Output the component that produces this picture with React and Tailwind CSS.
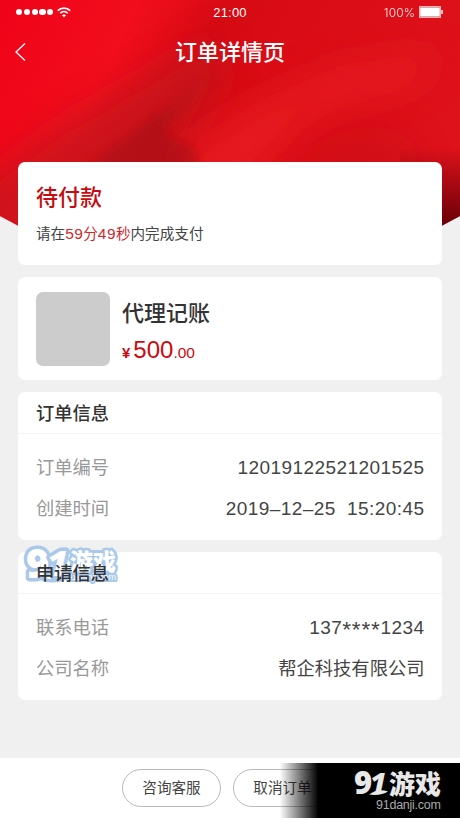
import React from 'react';

const FONT = "font-['Liberation_Sans','Noto_Sans_CJK_SC',sans-serif]";
const NUM = "font-['Inter','Noto_Sans_CJK_SC',sans-serif]";

const HeaderBackground = () => (
  <svg className="absolute left-0 top-0" width="460" height="260" viewBox="0 0 460 260" aria-hidden="true">
    <defs>
      <clipPath id="banner">
        <path d="M0 0H460V216L400 248H60L0 216Z" />
      </clipPath>
      <linearGradient id="base" x1="0" y1="0" x2="400" y2="200" gradientUnits="userSpaceOnUse">
        <stop offset="0" stopColor="#ef0218" />
        <stop offset="0.28" stopColor="#f20e1c" />
        <stop offset="0.46" stopColor="#d60b14" />
        <stop offset="0.6" stopColor="#da0c15" />
        <stop offset="1" stopColor="#de121b" />
      </linearGradient>
      <linearGradient id="edge" x1="0" y1="148" x2="0" y2="225" gradientUnits="userSpaceOnUse">
        <stop offset="0" stopColor="#6a0008" stopOpacity="0" />
        <stop offset="1" stopColor="#6a0008" />
      </linearGradient>
      <filter id="soft" filterUnits="userSpaceOnUse" x="-60" y="-60" width="580" height="380">
        <feGaussianBlur stdDeviation="17" />
      </filter>
      <filter id="fold" filterUnits="userSpaceOnUse" x="-60" y="-60" width="580" height="380">
        <feGaussianBlur stdDeviation="5" />
      </filter>
    </defs>
    <g clipPath="url(#banner)">
      <rect width="460" height="260" fill="url(#base)" />
      <path d="M-30 190L60 125L130 85L215 35L225 80L170 180L60 250H-30Z" fill="#c4131b" opacity="0.75" filter="url(#soft)" />
      <path d="M180 150L250 105L340 65L440 50L420 85L320 115L235 200H185Z" fill="#e81d22" opacity="0.8" filter="url(#soft)" />
      <path d="M270 190L310 145L370 122L410 140L430 190Z" fill="#c80f17" opacity="0.45" filter="url(#soft)" />
      <path d="M88 166L125 138L152 118L176 106L166 124L170 138L195 148L200 175H95Z" fill="#a01118" opacity="0.5" filter="url(#fold)" />
      <path d="M150 120L185 95L215 70L190 105L172 128Z" fill="#b01219" opacity="0.35" filter="url(#fold)" />
      <rect x="400" y="140" width="80" height="110" fill="url(#edge)" />
    </g>
  </svg>
);

const StatusBar = () => (
  <div className="flex h-6 items-center px-4 text-white">
    <div className="flex flex-1 items-center">
      <div className="flex gap-[1.6px]">
        {[0, 1, 2, 3, 4].map((i) => (
          <span key={i} className="h-[6.2px] w-[6.2px] rounded-full bg-white" />
        ))}
      </div>
      <svg className="ml-[4px]" width="14" height="11" viewBox="0 0 14 11" fill="none" stroke="white">
        <path d="M0.8 3.7C4.3 0.3 9.7 0.3 13.2 3.7" strokeWidth="1.8" />
        <path d="M3.2 6.2C5.4 4.1 8.6 4.1 10.8 6.2" strokeWidth="1.6" />
        <path d="M7 10.4L5 8.2C6.1 7.2 7.9 7.2 9 8.2Z" fill="white" stroke="none" />
      </svg>
    </div>
    <span className="pt-px text-[13px] tracking-[0.2px]">21:00</span>
    <div className="flex flex-1 items-center justify-end">
      <span className={`${NUM} mr-1 pt-px text-[12px] font-light tracking-[0.1px] opacity-90`}>100%</span>
      <svg width="25" height="12" viewBox="0 0 25 12">
        <rect x="0.5" y="0.5" width="21" height="11" fill="none" stroke="white" strokeOpacity="0.7" />
        <rect x="1.2" y="1.4" width="19.6" height="9.2" fill="white" />
        <rect x="22.4" y="4" width="1.4" height="4" fill="white" />
      </svg>
    </div>
  </div>
);

const InfoCard = ({ title, rows, watermark }) => (
  <section className="relative mt-3 h-[148px] rounded-[7px] bg-white">
    {watermark}
    <h2 className="relative flex h-[42px] items-center border-b border-[#f3f3f3] px-[18px] pt-[2px] text-[18.3px] font-medium text-[#333]">
      {title}
    </h2>
    <dl className="flex flex-col pt-[13px]">
      {rows.map(({ label, value, style }) => (
        <div key={label} className="flex h-[41px] items-center justify-between pl-[18px] pr-[17.5px] text-[18.3px]">
          <dt className="text-[#999]">{label}</dt>
          <dd className={`whitespace-pre text-[#444] ${style}`}>{value}</dd>
        </div>
      ))}
    </dl>
  </section>
);

const Watermark = () => (
  <svg className="absolute left-0 top-[-14px]" width="112" height="60" viewBox="0 0 112 60">
    <g stroke="#a9c8ea" strokeWidth="7" strokeLinejoin="round" fill="#fff" paintOrder="stroke">
      <rect x="52" y="12" width="46" height="32" rx="4" fill="#a9c8ea" stroke="none" />
      <text x="49" y="42" fontFamily="Liberation Sans" fontSize="9" strokeWidth="4" textLength="49" lengthAdjust="spacingAndGlyphs">91danji.com</text>
      <text x="52" y="32" fontFamily="Noto Sans CJK SC" fontWeight="900" fontSize="23" strokeWidth="5">游戏</text>
      <path d="M26 40Q37 32 49 37Q40 43 26 40Z" />
      <text x="8" y="40" fontFamily="Open Sans" fontWeight="800" fontSize="40">9</text>
      <text x="29" y="38" fontFamily="Open Sans" fontStyle="italic" fontWeight="800" fontSize="36">1</text>
    </g>
  </svg>
);

const SiteBadge = () => (
  <div className="absolute bottom-0 right-0 flex h-[55px] w-[184px] bg-linear-to-r from-transparent from-2% to-black to-[23%]">
    <svg width="184" height="55" viewBox="0 0 184 55" fill="#e8e8e8">
      <text x="78" y="31" fontFamily="Open Sans" fontWeight="800" fontSize="31">9</text>
      <text x="94" y="30" fontFamily="Open Sans" fontStyle="italic" fontWeight="800" fontSize="28">1</text>
      <path d="M93 31.5Q102 25 112 28.5Q105 33 93 31.5Z" />
      <text x="113" y="31" fontFamily="Noto Sans CJK SC" fontWeight="900" fontSize="26">游戏</text>
      <text x="100" y="46" fontFamily="Liberation Sans" fontSize="12.5" fill="#aaa" textLength="65">91danji.com</text>
    </svg>
  </div>
);

const maskedPhone = (
  <>
    137<span className="relative top-[3px] text-[22.5px] leading-none tracking-[0.8px]">****</span>1234
  </>
);

const orderRows = [
  { label: '订单编号', value: '12019122521201525', style: 'pt-px text-[19px] tracking-[0.43px]' },
  { label: '创建时间', value: '2019–12–25  15:20:45', style: 'pt-px text-[19px] tracking-[0.43px]' },
];

const applyRows = [
  { label: '联系电话', value: maskedPhone, style: 'pt-px text-[19px] tracking-[0.43px]' },
  { label: '公司名称', value: '帮企科技有限公司', style: '' },
];

const App = () => {
  return (
    <div className={`relative flex h-[818px] w-[460px] flex-col overflow-hidden bg-[#f0f0f0] ${FONT}`}>
      <HeaderBackground />

      <header className="relative h-[162px]">
        <StatusBar />
        <div className="flex h-[56px] items-center px-[14px] text-white">
          <svg width="12" height="20" viewBox="0 0 12 20" fill="none" stroke="white" strokeWidth="1.3">
            <path d="M11 1.5L2 10L11 18.5" />
          </svg>
          <h1 className="flex-1 pr-3 pt-[2px] text-center text-[22px] leading-none font-medium">订单详情页</h1>
        </div>
      </header>

      <main className="relative flex-1 px-[18px]">
        {/* Payment status */}
        <section className="h-[103px] rounded-[7px] bg-white px-[18px] pt-[22px]">
          <h2 className="text-[22px] leading-[28px] font-medium text-[#c60d12]">待付款</h2>
          <p className="mt-[12px] text-[14.6px] leading-[20px] text-[#444]">
            请在
            <span className="text-[#d0262c]">
              <span className="text-[15.5px] tracking-[0.4px]">59</span>分<span className="text-[15.5px] tracking-[0.4px]">49</span>秒
            </span>
            内完成支付
          </p>
        </section>

        {/* Product */}
        <section className="mt-3 flex h-[103px] gap-3 rounded-[7px] bg-white px-[18px] pt-[15px]">
          <div className="h-[74px] w-[74px] rounded-[7px] bg-[#ccc]" />
          <div className="pt-[7px]">
            <h3 className="text-[22px] leading-[30px] font-medium text-[#333]">代理记账</h3>
            <p className="mt-[6px] flex items-baseline leading-[30px] text-[#cc0a10]">
              <span className="mr-[3px] text-[15px] font-bold">¥</span>
              <span className="text-[24px]">500</span>
              <span className="text-[15.5px]">.00</span>
            </p>
          </div>
        </section>

        <InfoCard title="订单信息" rows={orderRows} />
        <InfoCard title="申请信息" rows={applyRows} watermark={<Watermark />} />
      </main>

      <footer className="relative flex h-[60px] items-center gap-3 bg-white pl-[122px]">
        {['咨询客服', '取消订单'].map((label) => (
          <button key={label} className="h-[38px] w-[99px] rounded-full border border-[#bbb] pt-[2px] text-[14.6px] text-[#444]">
            {label}
          </button>
        ))}
        <SiteBadge />
      </footer>
    </div>
  );
};

export default App;
